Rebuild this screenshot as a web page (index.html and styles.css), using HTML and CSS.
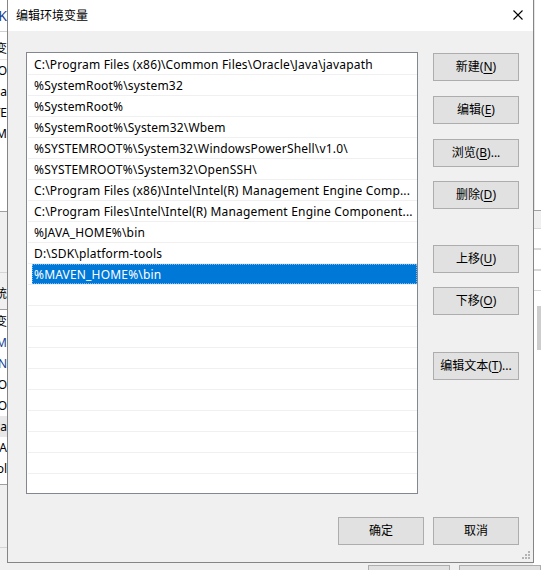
FILE: index.html
```html
<!DOCTYPE html>
<html lang="zh-CN">
<head>
<meta charset="utf-8">
<title>编辑环境变量</title>
<link rel="stylesheet" href="styles.css">
</head>
<body>
<div class="desk">
  <div class="bg-left">
    <div class="bl-title"><span class="peek blue">K</span></div>
    <div class="bl-hdr"><span class="peek">变</span></div>
    <div class="bl-row"><span class="peek">O</span></div>
    <div class="bl-row"><span class="peek">Pa</span></div>
    <div class="bl-row"><span class="peek">TE</span></div>
    <div class="bl-row"><span class="peek">TM</span></div>
    <div class="bl-fill"></div>
    <div class="bl-gap"></div>
    <div class="bl-grp"><span class="peek">统</span></div>
    <div class="bl-list">
      <div class="bl-row"><span class="peek">变</span></div>
      <div class="bl-row"><span class="peek blue">M</span></div>
      <div class="bl-row"><span class="peek blue">N</span></div>
      <div class="bl-row"><span class="peek">O</span></div>
      <div class="bl-row"><span class="peek">O</span></div>
      <div class="bl-row sel"><span class="peek">Pa</span></div>
      <div class="bl-row"><span class="peek">PA</span></div>
      <div class="bl-row"><span class="peek">ol</span></div>
    </div>
    <div class="bl-gap2"></div>
  </div>
  <div class="bg-right">
    <div class="br-top"></div>
    <div class="br-sep"></div>
    <div class="br-cell"></div>
    <div class="br-cell"></div>
    <div class="br-cell"></div>
    <div class="br-thumb"></div>
  </div>
  <div class="bg-bottom">
    <div class="bb-btn bb1"></div>
    <div class="bb-btn bb2"></div>
  </div>

  <div class="dialog">
    <div class="titlebar">
      <span class="title">编辑环境变量</span>
      <svg class="close" width="10" height="10" viewBox="0 0 10 10"><path d="M0.5 0.5 L9.5 9.5 M9.5 0.5 L0.5 9.5" stroke="#000" stroke-width="1.1" fill="none"/></svg>
    </div>
    <div class="client">
      <div class="main">
        <div class="list">
          <div class="row"><div class="cell">C:\Program Files (x86)\Common Files\Oracle\Java\javapath</div></div>
          <div class="row"><div class="cell">%SystemRoot%\system32</div></div>
          <div class="row"><div class="cell">%SystemRoot%</div></div>
          <div class="row"><div class="cell">%SystemRoot%\System32\Wbem</div></div>
          <div class="row"><div class="cell">%SYSTEMROOT%\System32\WindowsPowerShell\v1.0\</div></div>
          <div class="row"><div class="cell">%SYSTEMROOT%\System32\OpenSSH\</div></div>
          <div class="row"><div class="cell">C:\Program Files (x86)\Intel\Intel(R) Management Engine Comp...</div></div>
          <div class="row"><div class="cell">C:\Program Files\Intel\Intel(R) Management Engine Component...</div></div>
          <div class="row"><div class="cell">%JAVA_HOME%\bin</div></div>
          <div class="row"><div class="cell">D:\SDK\platform-tools</div></div>
          <div class="row selected"><div class="cell">%MAVEN_HOME%\bin</div></div>
          <div class="row"><div class="cell"></div></div>
          <div class="row"><div class="cell"></div></div>
          <div class="row"><div class="cell"></div></div>
          <div class="row"><div class="cell"></div></div>
          <div class="row"><div class="cell"></div></div>
          <div class="row"><div class="cell"></div></div>
          <div class="row"><div class="cell"></div></div>
          <div class="row"><div class="cell"></div></div>
          <div class="row"><div class="cell"></div></div>
          <div class="row"><div class="cell"></div></div>
        </div>
        <div class="side">
          <button class="btn b-new">新建(<u>N</u>)</button>
          <button class="btn b-edit">编辑(<u>E</u>)</button>
          <button class="btn b-browse">浏览(<u>B</u>)...</button>
          <button class="btn b-del">删除(<u>D</u>)</button>
          <button class="btn b-up">上移(<u>U</u>)</button>
          <button class="btn b-down">下移(<u>O</u>)</button>
          <button class="btn b-text">编辑文本(<u>T</u>)...</button>
        </div>
      </div>
      <div class="footer">
        <button class="btn">确定</button>
        <button class="btn">取消</button>
      </div>
    </div>
    <svg class="grip" width="8" height="8" viewBox="0 0 8 8">
      <rect x="6" y="0" width="2" height="2" fill="#b4b4b4"/>
      <rect x="3" y="3" width="2" height="2" fill="#b4b4b4"/>
      <rect x="6" y="3" width="2" height="2" fill="#b4b4b4"/>
      <rect x="0" y="6" width="2" height="2" fill="#b4b4b4"/>
      <rect x="3" y="6" width="2" height="2" fill="#b4b4b4"/>
      <rect x="6" y="6" width="2" height="2" fill="#b4b4b4"/>
    </svg>
  </div>
</div>
</body>
</html>
```
FILE: styles.css
```css
* { box-sizing: border-box; }
html, body { margin: 0; padding: 0; }
body {
  width: 541px;
  height: 570px;
  overflow: hidden;
  background: #f0f0f0;
  font-family: "Noto Sans", "Noto Sans CJK SC", sans-serif;
  font-size: 12px;
  color: #000;
}
.desk { position: relative; width: 541px; height: 570px; overflow: hidden; }

/* background window peeking out */
.bg-left {
  position: absolute; left: 0; top: 0; width: 7px; height: 570px;
  overflow: hidden; background: #f0f0f0;
  display: flex; flex-direction: column;
}
.peek {
  display: block; width: 40px; margin-left: -33px; text-align: right;
  white-space: nowrap; line-height: 21px; font-size: 12px;
}
.blue { color: #1a3f8f; }
.bl-title { height: 32px; background: #fff; border-bottom: 1px solid #d0d0d0; padding-top: 5px; }
.bl-title .peek { font-size: 14px; }
.bl-hdr { height: 28px; background: #fff; padding-top: 6px; border-bottom: 1px solid #e5e5e5; }
.bl-row { height: 21px; background: #fff; }
.bl-row.sel { background: #e8e8e8; }
.bl-fill { height: 68px; background: #fff; border-bottom: 1px solid #a0a0a0; }
.bl-gap { height: 61px; border-bottom: 1px solid #d5d5d5; }
.bl-grp { height: 37px; padding-top: 10px; border-bottom: 1px solid #a0a0a0; }
.bl-list { padding-top: 1px; background: #fff; height: 175px; border-bottom: 1px solid #a0a0a0; }
.bl-gap2 { height: 63px; border-bottom: 1px solid #d5d5d5; }

.bg-right {
  position: absolute; left: 533px; top: 0; width: 8px; height: 570px;
  background: #fff; display: flex; flex-direction: column;
}
.br-top { height: 210px; border-left: 2px solid #e6e6e6; }
.br-sep { height: 18px; background: #f0f0f0; border-top: 1px solid #a0a0a0; }
.br-cell { height: 21px; border-bottom: 1px solid #d8d8d8; border-top: 1px solid #d8d8d8; }
.br-thumb { margin-top: 15px; height: 44px; background: #cdcdcd; margin-left: 4px; }

.bg-bottom {
  position: absolute; left: 0; top: 563px; width: 541px; height: 7px;
  display: flex;
}
.bb-btn { height: 20px; background: #e1e1e1; border: 1px solid #adadad; margin-top: 2px; }
.bb1 { margin-left: 368px; width: 86px; }
.bb2 { margin-left: 9px; width: 86px; }

/* dialog */
.dialog {
  position: absolute; left: 7px; top: -1px;
  width: 527px; height: 564px;
  border: 1px solid #858585;
  background: #f0f0f0;
  display: flex; flex-direction: column;
}
.titlebar {
  height: 31px; background: #fff;
  display: flex; align-items: center; justify-content: space-between;
  padding: 0 10px 0 8px;
  flex: none;
}
.title { font-size: 12px; line-height: 31px; padding-bottom: 1px; }
.close { display: block; margin-top: -1px; }

.client { padding: 21px 14px 0 18px; flex: 1; }
.main { display: flex; }
.list {
  width: 392px; height: 442px;
  border: 1px solid #828790;
  background: #fff;
  padding-top: 1px;
  overflow: hidden;
  flex: none;
}
.row {
  height: 21px;
  margin-left: 1px;
  padding-left: 4px;
  border-bottom: 1px solid #f0f0f0;
}
.cell {
  height: 20px; line-height: 21px;
  padding-left: 2px;
  white-space: nowrap; overflow: hidden;
  letter-spacing: 0.18px;
  color: #000;
}
.row.selected .cell {
  background: #0078d7; color: #fff;
  outline: 1px dotted #7fb8ea; outline-offset: -1px;
}

.side {
  margin-left: 15px; width: 86px;
  display: flex; flex-direction: column;
  padding-top: 1px;
}
.btn {
  width: 86px; height: 28px;
  background: #e1e1e1;
  border: 1px solid #adadad;
  font-family: "Noto Sans", "Noto Sans CJK SC", sans-serif;
  font-size: 12px;
  color: #000;
  padding: 0;
  line-height: 26px;
  text-align: center;
}
.btn u { text-underline-offset: 2px; }
.b-edit, .b-browse { margin-top: 15px; }
.b-del { margin-top: 14px; }
.b-up { margin-top: 36px; }
.b-down { margin-top: 14px; }
.b-text { margin-top: 37px; }

.footer {
  margin-top: 23px;
  display: flex; justify-content: flex-end; gap: 9px;
}
.grip { position: absolute; right: 3px; bottom: 3px; }
```
